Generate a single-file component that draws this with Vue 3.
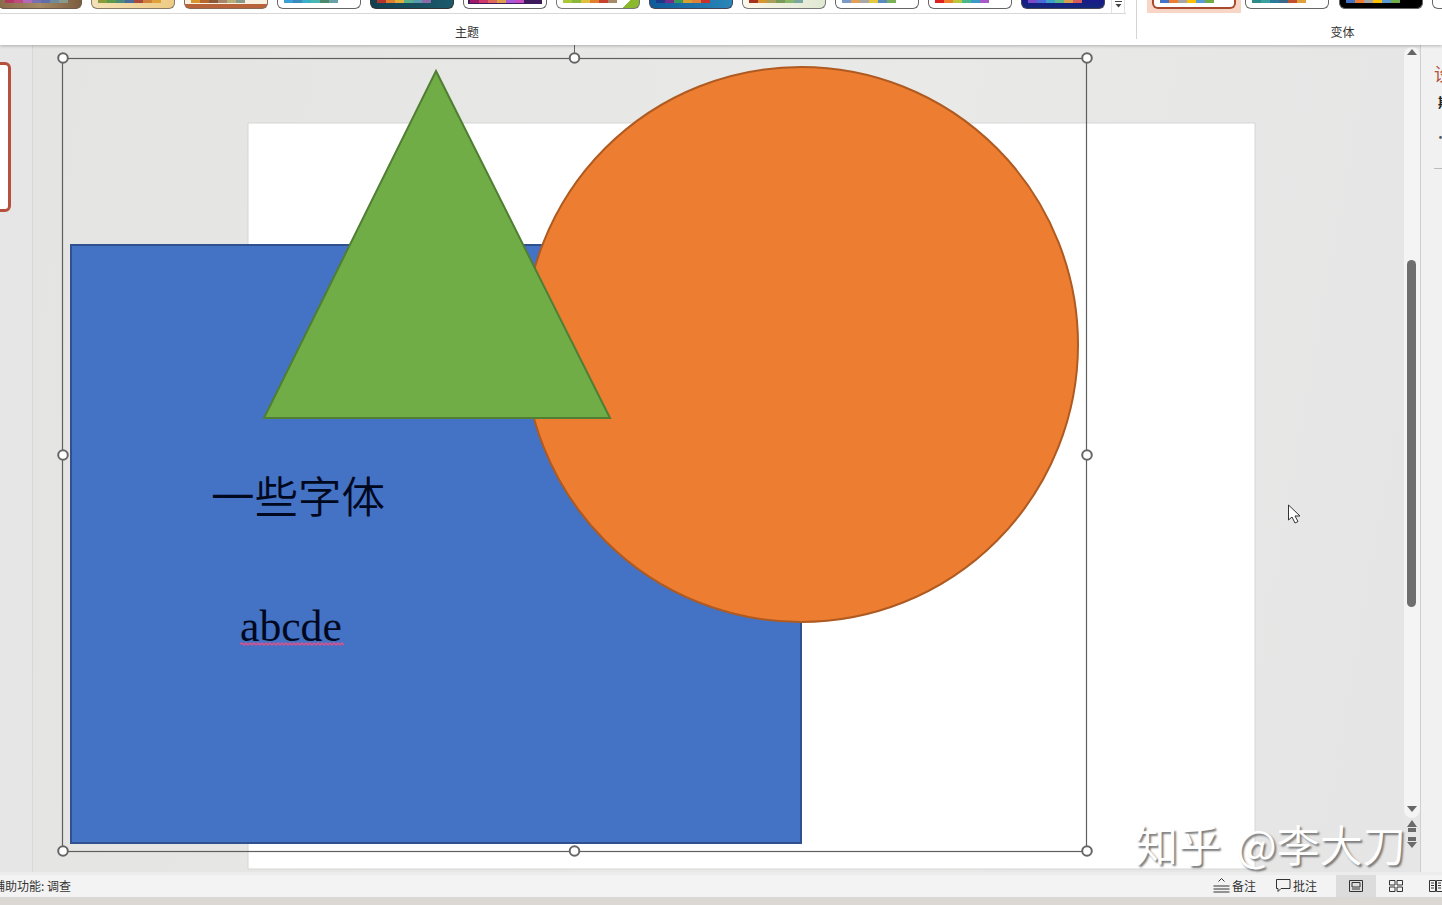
<template>
  <div class="window">
    <header class="ribbon">
      <section class="group themes">
        <div class="gallery">
          <div v-for="(t, i) in themes" :key="i" class="tile" :style="{ background: t.bg, borderColor: t.edge }">
            <div class="palette" :style="{ background: t.band }">
              <span v-for="c in t.colors" :key="c" class="swatch" :style="{ background: c }"></span>
            </div>
          </div>
          <button class="more" aria-label="更多">
            <svg width="9" height="9" viewBox="0 0 9 9"><path d="M1 1.500h7" stroke="#444" fill="none" /><path d="M1.500 4h6L4.500 7.500z" fill="#444" /></svg>
          </button>
        </div>
        <div class="group-label">主题</div>
      </section>
      <section class="group variants">
        <div class="gallery variant-row">
          <div class="variant-selected">
            <div class="tile picked">
              <div class="palette">
                <span v-for="c in variantA" :key="c" class="swatch" :style="{ background: c }"></span>
              </div>
            </div>
          </div>
          <div class="tile">
            <div class="palette">
              <span v-for="c in variantB" :key="c" class="swatch" :style="{ background: c }"></span>
            </div>
          </div>
          <div class="tile dark">
            <div class="palette">
              <span v-for="c in variantC" :key="c" class="swatch" :style="{ background: c }"></span>
            </div>
          </div>
          <div class="tile"></div>
        </div>
        <div class="group-label">变体</div>
      </section>
    </header>

    <main class="workspace">
      <aside class="thumbs">
        <div class="thumb"></div>
      </aside>

      <div class="stage">
        <svg class="canvas" viewBox="33 45 1371 827" width="1371" height="827">
          <rect x="248" y="123" width="1007" height="746" fill="#fff" stroke="#d6d6d6" />
          <rect x="71" y="245" width="730" height="598" fill="#4472c4" stroke="#2f528f" stroke-width="2" />
          <ellipse cx="801" cy="344.500" rx="277" ry="277.500" fill="#ed7d31" stroke="#ae5a21" stroke-width="2" />
          <path d="M436 71 L610 418 L264 418 Z" fill="#70ad47" stroke="#507e32" stroke-width="2" />

          <text x="211" y="513" class="cjk">一些字体</text>
          <text x="240" y="641" class="latin">abcde</text>
          <path :d="squiggle" fill="none" stroke="#e0508a" stroke-width="1.400" />

          <line x1="574.500" y1="45" x2="574.500" y2="58" stroke="#666" />
          <rect x="62.500" y="58.500" width="1024" height="793" fill="none" stroke="#5f5f5f" stroke-width="1.200" />
          <circle v-for="h in handles" :key="h[0] + '-' + h[1]" :cx="h[0]" :cy="h[1]" r="4.800" fill="#fff" stroke="#666" stroke-width="2" />

          <path d="M1288.500 505 V520 L1292 517 L1295 523 L1298 521.500 L1295 516 H1300 Z" fill="#fff" stroke="#333" stroke-width="1" stroke-linejoin="round" />
        </svg>
        <div class="watermark">知乎 @李大刀</div>
      </div>

      <div class="scrollbar">
        <div class="track">
          <span class="arrow up"></span>
          <div class="scroll-thumb"></div>
          <span class="arrow down"></span>
        </div>
        <svg class="page-arrows" width="12" height="32" viewBox="0 0 12 32">
          <path d="M6 0l5 7H1zM2 8h8v4H2z" fill="#6a6a6a" />
          <path d="M2 17h8v4H2zM1 22h10l-5 6z" fill="#6a6a6a" />
        </svg>
      </div>

      <aside class="side">
        <span class="side-title">设计器</span>
        <span class="side-line">期</span>
        <span class="side-dot">·</span>
        <div class="side-rule"></div>
      </aside>
    </main>

    <footer class="status">
      <span class="status-text">辅助功能: 调查</span>
      <div class="status-right">
        <span class="status-item notes">
          <svg width="17" height="16" viewBox="0 0 17 16"><path d="M5.500 4.500 8.500 1.500l3 3M.5 9h16M.5 12h16M.5 15h16" fill="none" stroke="#333" /></svg>
          备注
        </span>
        <span class="status-item comments">
          <svg width="15" height="15" viewBox="0 0 15 15"><path d="M.5 1.500h13.500v9H5L2 13.500v-3H.5z" fill="none" stroke="#333" /></svg>
          批注
        </span>
        <span class="view active">
          <svg width="14" height="12" viewBox="0 0 14 12"><path d="M.5.5h13v11H.5zM3 2.500h8v4.500H3zM3 9h8" fill="none" stroke="#333" /></svg>
        </span>
        <span class="view">
          <svg width="14" height="12" viewBox="0 0 14 12"><path d="M.5.5h5.500v4.500H.5zM8 .5h5.500v4.500H8zM.5 7h5.500v4.500H.5zM8 7h5.500v4.500H8z" fill="none" stroke="#333" /></svg>
        </span>
        <span class="view">
          <svg width="14" height="12" viewBox="0 0 14 12"><path d="M.5.5h6v11h-6zM7.500.5h6v11h-6zM2 3h3M2 5.500h3M2 8h3M9 3h3M9 5.500h3M9 8h3" fill="none" stroke="#333" /></svg>
        </span>
      </div>
    </footer>
    <div class="taskbar"></div>
  </div>
</template>

<script setup>
const themes = [
  { bg: 'linear-gradient(90deg,#8a6b4a,#a58a63 50%,#7c5e3f)', edge: '#6e5a48', band: 'transparent', colors: ['#b03a5e', '#c04a7e', '#b06ab8', '#7a6fb0', '#5f6fa8', '#6f8a9c', '#8a9a8a'] },
  { bg: 'linear-gradient(90deg,#f3e1b5,#eecb85)', edge: '#8a7a66', band: 'transparent', colors: ['#8a9a3a', '#5a9a4a', '#4a8a7a', '#4a6a9a', '#a84a3a', '#d0803a', '#e0a03a'] },
  { bg: 'linear-gradient(180deg,#f8f0e0 0 4px,#b9633a 4px)', edge: '#8a6a52', band: 'transparent', colors: ['#d8962e', '#b8662e', '#8a5a3a', '#a8866a', '#b8b07a', '#8a9a8a'] },
  { bg: '#fff', edge: '#666', band: 'transparent', colors: ['#3aa0d8', '#3a8ac0', '#3ab0c8', '#4ab8b0', '#4a8a6a', '#6aa0a8'] },
  { bg: 'linear-gradient(90deg,#12404f,#1b5a6c)', edge: '#333', band: 'transparent', colors: ['#b8322e', '#e0802e', '#e0b03a', '#5ab08a', '#5a9ab0', '#8a6aa8'] },
  { bg: '#fff', edge: '#666', band: '#3d1a5c', colors: ['#a01a6a', '#d03a6a', '#e06a5a', '#e0a04a', '#a85ad8', '#c84ac0'] },
  { bg: 'linear-gradient(135deg,#fff 82%,#8ab82e 82%)', edge: '#777', band: 'transparent', colors: ['#a8c83a', '#8ab83a', '#e0c03a', '#e0802e', '#c8402e', '#a88a6a'] },
  { bg: 'linear-gradient(90deg,#0f5a9a,#2a86b8)', edge: '#445', band: 'transparent', colors: ['#1a3a8a', '#7a2a8a', '#3a9a5a', '#d8a02e', '#e0803a', '#c8322e'] },
  { bg: 'linear-gradient(90deg,#fdf8ea,#dfe8d2)', edge: '#777', band: 'transparent', colors: ['#a8321e', '#d8962e', '#a8a05a', '#7a9a5a', '#8ab86a', '#7aa8a0'] },
  { bg: '#fff', edge: '#666', band: 'transparent', colors: ['#7a9ac8', '#e0a05a', '#a8a8a8', '#e8c83a', '#5a8ac0', '#7ab05a'] },
  { bg: '#fff', edge: '#666', band: 'transparent', colors: ['#e0201e', '#f0802e', '#b8c83a', '#4ab88a', '#3a9ac8', '#a85ac8'] },
  { bg: 'linear-gradient(#1a1a8a,#12287a)', edge: '#445', band: 'transparent', colors: ['#7a4ac8', '#4a6ad8', '#3aa0c8', '#5ab88a', '#d8a04a', '#d85a5a'] }
];

const variantA = ['#4472c4', '#ed7d31', '#a5a5a5', '#ffc000', '#5b9bd5', '#70ad47'];
const variantB = ['#2e8b8b', '#3aa0a0', '#2a7a9a', '#3a6a8a', '#c0502e', '#e0a03a'];
const variantC = ['#4472c4', '#ed7d31', '#a5a5a5', '#ffc000', '#5b9bd5', '#70ad47'];

const handles = [
  [63, 58], [574.5, 58], [1087, 58],
  [63, 455], [1087, 455],
  [63, 851], [574.5, 851], [1087, 851]
];

// red wavy spell-check underline below "abcde"
let squiggle = 'M240 644';
for (let x = 242, up = true; x <= 344; x += 2, up = !up) {
  squiggle += ` L${x} ${up ? 643 : 645}`;
}
</script>

<style>
html, body {
  margin: 0;
  overflow: hidden;
}
</style>

<style scoped>
.window {
  width: 1442px;
  height: 905px;
  display: flex;
  flex-direction: column;
  overflow: hidden;
  background: #e6e6e6;
  font-family: "Noto Sans CJK SC", "Liberation Sans", sans-serif;
  color: #333;
}

/* ribbon */
.ribbon {
  height: 45px;
  flex: none;
  display: flex;
  background: #fff;
  box-shadow: 0 1px 3px rgba(0, 0, 0, 0.25);
  position: relative;
  z-index: 2;
}
.group {
  flex: none;
  height: 39px;
  display: flex;
  flex-direction: column;
}
.themes {
  width: 1339px;
  margin-left: -202px;
  padding-left: 200px;
  box-sizing: border-box;
  border-right: 1px solid #d4d4d4;
}
.variants {
  width: 411px;
}
.gallery {
  height: 14px;
  flex: none;
  display: flex;
  gap: 9px;
  box-sizing: border-box;
  border-bottom: 1px solid #d8d8d8;
  overflow: hidden;
  width: 1128px;
}
.tile {
  width: 84px;
  height: 9px;
  flex: none;
  box-sizing: border-box;
  border: 1px solid #666;
  border-top: none;
  border-radius: 0 0 6px 6px;
  background: #fff;
  overflow: hidden;
}
.palette {
  height: 4px;
  margin: 0 4px;
  padding: 0 2px;
  display: flex;
}
.swatch {
  width: 9px;
  height: 3px;
  flex: none;
}
.more {
  width: 14px;
  height: 13px;
  margin-left: -3px;
  padding: 0;
  display: flex;
  align-items: flex-start;
  justify-content: center;
  background: #fff;
  border: none;
  border-left: 1px solid #e2e2e2;
  border-right: 1px solid #e2e2e2;
}
.group-label {
  margin-top: 11px;
  font-size: 12px;
  line-height: 13px;
  text-align: center;
  color: #333;
}
.themes .group-label {
  margin-left: -200px;
}
.variant-row {
  border-bottom: none;
  width: auto;
  gap: 9px;
  padding-left: 10px;
}
.variant-selected {
  width: 94px;
  height: 13px;
  flex: none;
  margin-right: -5px;
  padding-left: 5px;
  box-sizing: border-box;
  background: #f8d6c6;
}
.tile.picked {
  border-color: #a8492e;
  border-width: 0 2px 2px;
}
.tile.dark {
  background: #000;
  margin-left: 1px;
}

/* main area */
.workspace {
  flex: 1;
  min-height: 0;
  display: flex;
  border-bottom: 3px solid #ececec;
}
.thumbs {
  width: 33px;
  flex: none;
  box-sizing: border-box;
  border-right: 1px solid #d8d8d8;
  padding-top: 17px;
  overflow: hidden;
}
.thumb {
  width: 31px;
  height: 150px;
  margin-left: -20px;
  box-sizing: border-box;
  border: 3px solid #b5503c;
  border-radius: 6px;
  background: #fff;
}
.stage {
  width: 1371px;
  flex: none;
  position: relative;
  z-index: 1;
  background: linear-gradient(100deg, #e4e4e3, #e9e9e8 60%, #e5e5e5);
}
.canvas {
  display: block;
}
.cjk {
  font-family: "Noto Sans CJK SC", sans-serif;
  font-size: 43.500px;
  font-weight: 350;
  fill: #000820;
}
.latin {
  font-family: "Liberation Serif", serif;
  font-size: 43.700px;
  fill: #000820;
}
.watermark {
  position: absolute;
  left: 1102px;
  top: 770px;
  white-space: nowrap;
  font-size: 43px;
  line-height: 56px;
  word-spacing: 6px;
  font-weight: 350;
  color: #fff;
  text-shadow: 2px 2px 2px #777;
}

.scrollbar {
  width: 17px;
  flex: none;
  box-sizing: border-box;
  display: flex;
  flex-direction: column;
  align-items: center;
  border-right: 1px solid #cfcfcf;
  background: #e6e6e6;
}
.track {
  width: 100%;
  height: 771px;
  margin-top: 2px;
  padding-right: 1px;
  box-sizing: border-box;
  flex: none;
  display: flex;
  flex-direction: column;
  align-items: center;
  background: #f4f4f4;
  border-radius: 8px;
}
.arrow {
  width: 0;
  height: 0;
  border-left: 5px solid transparent;
  border-right: 5px solid transparent;
}
.arrow.up {
  margin-top: 2px;
  border-bottom: 6px solid #666;
}
.arrow.down {
  margin-top: 199px;
  border-top: 6px solid #666;
}
.scroll-thumb {
  width: 9px;
  height: 347px;
  margin-top: 205px;
  border-radius: 5px;
  background: #6e6e6e;
}
.page-arrows {
  margin-top: 2px;
}

.side {
  flex: 1;
  min-width: 0;
  overflow: hidden;
  background: #f1f1f1;
  display: flex;
  flex-direction: column;
}
.side-title {
  margin: 18px 0 0 13px;
  white-space: nowrap;
  font-size: 18px;
  line-height: 20px;
  color: #b5503c;
}
.side-line {
  margin: 11px 0 0 17px;
  font-size: 13px;
  line-height: 16px;
  font-weight: 700;
  color: #222;
}
.side-dot {
  margin: 19px 0 0 13px;
  font-size: 13px;
  line-height: 16px;
  color: #555;
}
.side-rule {
  margin: 23px 0 0 13px;
  height: 1px;
  background: #bbb;
}

/* status bar */
.status {
  height: 22px;
  flex: none;
  display: flex;
  align-items: center;
  justify-content: space-between;
  background: #f3f3f3;
  font-size: 12px;
  color: #333;
}
.status-text {
  margin-left: -7px;
  margin-top: -2px;
  white-space: nowrap;
}
.status-right {
  display: flex;
  align-items: center;
  height: 100%;
}
.status-item {
  display: flex;
  align-items: center;
  gap: 2px;
  margin-top: -2px;
  white-space: nowrap;
}
.notes {
  margin-right: 20px;
}
.comments {
  margin-right: 19px;
}
.view {
  width: 40px;
  height: 100%;
  flex: none;
  display: flex;
  align-items: center;
  justify-content: center;
}
.view.active {
  background: #dcdcdc;
}
.view:last-child {
  width: 20px;
  justify-content: flex-end;
  margin-left: 7px;
  margin-right: -1px;
}
.taskbar {
  height: 8px;
  flex: none;
  background: #dbd7d3;
}
</style>
